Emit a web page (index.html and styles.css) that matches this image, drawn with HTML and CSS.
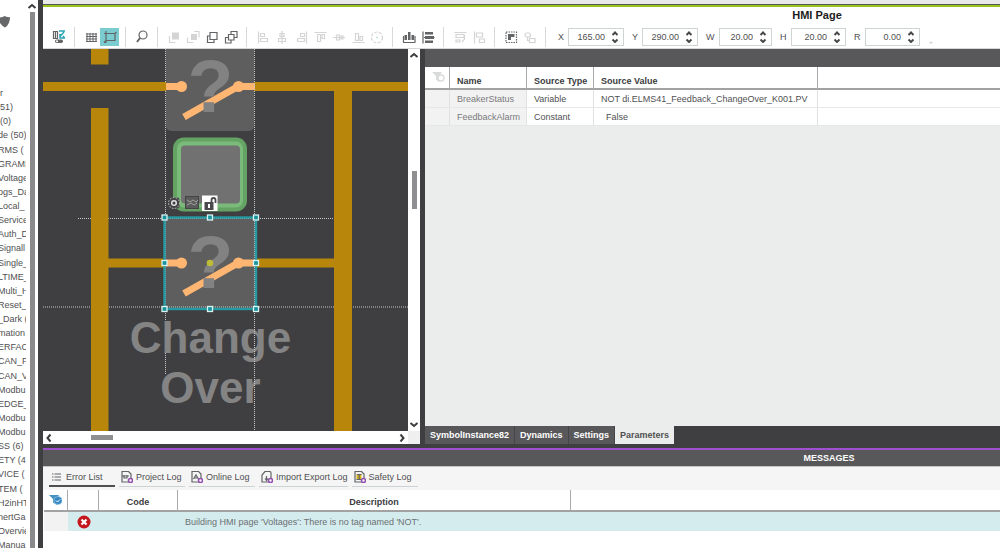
FILE: index.html
```html
<!DOCTYPE html>
<html lang="en">
<head>
<meta charset="utf-8">
<title>HMI Page</title>
<link rel="stylesheet" href="styles.css">
</head>
<body>
<div class="app">
  <aside class="sidebar">
    <div class="tree">
      <svg class="shield" viewBox="0 0 12 12"><path d="M0 1.500Q3 1 4.500 0Q7 1.500 10 1Q10 8.500 5 11.500Q2 10 0 7Z" fill="#66686a"/></svg>
      <ul class="tree-list">
        <li>r</li><li>51)</li><li>(0)</li><li>de (50)</li><li>RMS (</li><li>GRAMS</li><li>Voltage</li><li>ogs_Da</li>
        <li>Local_</li><li>Service</li><li>Auth_D</li><li>Signall</li><li>Single_</li><li>LTIME_</li><li>Multi_H</li><li>Reset_</li>
        <li>_Dark (</li><li>mation</li><li>ERFAC</li><li>CAN_F</li><li>CAN_V</li><li>Modbu</li><li>EDGE_</li><li>Modbu</li>
        <li>Modbu</li><li>SS (6)</li><li>ETY (4</li><li>VICE (</li><li>TEM (</li><li>H2inHT</li><li>nertGa</li><li>Overvie</li><li>Manua</li>
      </ul>
    </div>
    <div class="tree-scroll">
      <button class="arrow" aria-label="Scroll up"><svg viewBox="0 0 10 6"><path d="M1.500 5L5 2L8.500 5"/></svg></button>
      <div class="thumb"></div>
    </div>
  </aside>

  <main class="main">
    <header class="page-title"><h1>HMI Page</h1></header>

    <div class="toolbar">
      <div class="group">
        <button class="tool" aria-label="Toggle view"><svg viewBox="0 0 16 16"><path d="M2.500 2.500h4v7h-4zM4.500 2.500v7" class="s"/><path d="M8 2h6M13 3L9 7.500M9 5v4h5M12 7l1.500 2" stroke="#2aa4b4" stroke-width="1.500" fill="none"/><rect x="4" y="10.500" width="8" height="3.500" rx="1.700" fill="#636466"/><circle cx="6" cy="12.200" r="1" fill="#fff"/></svg></button>
      </div>
      <div class="group">
        <button class="tool" aria-label="Grid"><svg viewBox="0 0 16 16"><path d="M4 4v9M7 4v9M10 4v9M13 4v9M3 5h11M3 7.500h11M3 10h11M3 12.500h11" class="s thin"/></svg></button>
        <button class="tool active" aria-label="Snap"><svg viewBox="0 0 16 16"><path d="M4 4.500h9v7H4zM2 4.500h2M4 2v2.500M2 13.500l2-2M13 4.500l1.500-1.500M4 11.500v2.500" class="s"/></svg></button>
      </div>
      <div class="group">
        <button class="tool" aria-label="Zoom"><svg viewBox="0 0 16 16"><circle cx="9" cy="6" r="4" class="s"/><path d="M6 9L3 13" class="s thick"/></svg></button>
      </div>
      <div class="group">
        <button class="tool off" aria-label="Bring to front"><svg viewBox="0 0 16 16"><path d="M6 3.500h7v7H6z" class="f"/><path d="M3.500 7v6.500h6" class="s"/></svg></button>
        <button class="tool off" aria-label="Bring forward"><svg viewBox="0 0 16 16"><path d="M6 5h6v6H6z" class="f"/><path d="M9 2.500h5v6M2.500 8.500v5h6" class="s"/></svg></button>
        <button class="tool" aria-label="Send backward"><svg viewBox="0 0 16 16"><path d="M6 3.500h7v7H6zM6 7H3.500v6.500H10v-3" class="s"/></svg></button>
        <button class="tool" aria-label="Send to back"><svg viewBox="0 0 16 16"><path d="M5.500 5.500h5.500v5.500H5.500zM8 5V2.500h6v6h-3M5.500 8.500H2.500V14H8v-3" class="s"/></svg></button>
      </div>
      <div class="group">
        <button class="tool off" aria-label="Align left"><svg viewBox="0 0 16 16"><path d="M3.500 2.500v12M5.500 4.500h4v3h-4zM5.500 9.500h7v3h-7z" class="s"/></svg></button>
        <button class="tool off" aria-label="Align center"><svg viewBox="0 0 16 16"><path d="M8 2v13M6 4.500h4v3H6zM4.500 9.500h7v3h-7z" class="s"/></svg></button>
        <button class="tool off" aria-label="Align right"><svg viewBox="0 0 16 16"><path d="M13.500 2.500v12M7.500 4.500h4v3h-4zM4.500 9.500h7v3h-7z" class="s"/></svg></button>
        <button class="tool off" aria-label="Align top"><svg viewBox="0 0 16 16"><path d="M2.500 3.500h12M5.500 5.500h3v7h-3zM10 5.500h2.500v4H10z" class="s"/></svg></button>
        <button class="tool off" aria-label="Align middle"><svg viewBox="0 0 16 16"><path d="M2 8.500h12M5.500 6h3v5h-3zM10 7h2v3h-2z" class="s"/></svg></button>
        <button class="tool off" aria-label="Align bottom"><svg viewBox="0 0 16 16"><path d="M2.500 13.500h12M5.500 4.500h3v7h-3zM10 7.500h2.500v4H10z" class="s"/></svg></button>
        <button class="tool off" aria-label="Rotate"><svg viewBox="0 0 16 16"><circle cx="8" cy="8.500" r="5.500" class="s" stroke-dasharray="3 1.500"/><circle cx="8" cy="8.500" r=".8" fill="#9cd3c8"/></svg></button>
      </div>
      <div class="group">
        <button class="tool" aria-label="Distribute horizontally"><svg viewBox="0 0 16 16"><path d="M3.500 6H6v5H3.500zM7 3h2.500v8H7zM10.500 6H13v5h-2.500z" class="f"/><path d="M2 13.500h12.500M2.500 7v6M14 7v6" class="s"/></svg></button>
        <button class="tool" aria-label="Distribute vertically"><svg viewBox="0 0 16 16"><path d="M5 3h8v2.500H5zM5 7h9v3H5zM5 11.500h8V14H5z" class="f"/><path d="M3 2.500v12M4 8.500h10.500" class="s"/></svg></button>
      </div>
      <div class="group">
        <button class="tool off" aria-label="Same width"><svg viewBox="0 0 16 16"><path d="M2.500 3.500h12M4 5.500h8v3H4zM4 11h4v2H4zM12.500 6v4L10 13" class="s"/></svg></button>
        <button class="tool off" aria-label="Same height"><svg viewBox="0 0 16 16"><path d="M3.500 2.500v12M5.500 4h6v4h-6zM8.500 10h5v3.500h-5z" class="s"/></svg></button>
      </div>
      <div class="group">
        <button class="tool" aria-label="Group"><svg viewBox="0 0 16 16"><path d="M3 3h10.500v10.500H3z" class="s" stroke-dasharray="1.500 1"/><path d="M5 5h3v6H5zM8 5h3.500v3H8z" class="f"/></svg></button>
        <button class="tool off" aria-label="Ungroup"><svg viewBox="0 0 16 16"><rect x="3" y="4" width="5.500" height="4" rx="2" class="s"/><path d="M5.500 8v3.500h2M7.500 9.500H13v4H7.500z" class="s"/></svg></button>
      </div>
      <div class="fields">
        <div class="field"><label for="fx">X</label><div class="box"><input id="fx" type="text" value="165.00"><button class="spin" aria-label="Step X"><svg viewBox="0 0 8 12"><path d="M1.500 4L4 1.500L6.500 4M1.500 8.500L4 11L6.500 8.500"/></svg></button></div></div>
        <div class="field"><label for="fy">Y</label><div class="box"><input id="fy" type="text" value="290.00"><button class="spin" aria-label="Step Y"><svg viewBox="0 0 8 12"><path d="M1.500 4L4 1.500L6.500 4M1.500 8.500L4 11L6.500 8.500"/></svg></button></div></div>
        <div class="field"><label for="fw">W</label><div class="box"><input id="fw" type="text" value="20.00"><button class="spin" aria-label="Step W"><svg viewBox="0 0 8 12"><path d="M1.500 4L4 1.500L6.500 4M1.500 8.500L4 11L6.500 8.500"/></svg></button></div></div>
        <div class="field"><label for="fh">H</label><div class="box"><input id="fh" type="text" value="20.00"><button class="spin" aria-label="Step H"><svg viewBox="0 0 8 12"><path d="M1.500 4L4 1.500L6.500 4M1.500 8.500L4 11L6.500 8.500"/></svg></button></div></div>
        <div class="field"><label for="fr">R</label><div class="box"><input id="fr" type="text" value="0.00"><button class="spin" aria-label="Step R"><svg viewBox="0 0 8 12"><path d="M1.500 4L4 1.500L6.500 4M1.500 8.500L4 11L6.500 8.500"/></svg></button></div></div>
        <button class="overflow" aria-label="More tools"><svg viewBox="0 0 4 2"><path d="M0 0h4L2 2z" fill="#d0d0d0"/></svg></button>
      </div>
    </div>

    <div class="workspace">
      <section class="editor">
        <svg class="canvas">
          <defs>
            <g id="breaker">
              <path d="M0 37.500H16M72 37.500H89" stroke="#ffb672" stroke-width="7"/>
              <path d="M18 68L72 37.500" stroke="#ffb672" stroke-width="7"/>
              <circle cx="15.500" cy="37.500" r="5.500" fill="#ffb672"/><circle cx="72.500" cy="37.500" r="5.500" fill="#ffb672"/>
            </g>
            <rect id="handle" x="-2.500" y="-2.500" width="5" height="5" fill="#18919b" stroke="#d9f3f3" stroke-width="1.300"/>
          </defs>
          <g transform="translate(-43 -49)">
            <rect x="166" y="40" width="88" height="91" rx="5" fill="#5e5e5e"/>
            <rect x="165" y="218" width="91" height="91" fill="#5e5e5e"/>
            <path d="M43 307H408M78 218.500H334" class="guide"/>
            <path d="M165.500 49V375" class="guide"/>
            <g fill="#b8860b">
              <path d="M91 49h17.500v15.500H91zM91 108h17.500v323H91zM43 82h123v9H43zM254 82h154v9H254zM334 82h18v349h-18zM108 258.500h57v9h-57zM256 258.500h78v9h-78z"/>
            </g>
            <use href="#breaker" x="166" y="49"/>
            <use href="#breaker" x="166" y="225.500"/>
            <text x="210.500" y="112" class="mark">?</text>
            <text x="210.500" y="288" class="mark">?</text>
            <text x="210.500" y="353" class="caption">Change</text>
            <text x="210.500" y="403" class="caption">Over</text>
            <path d="M254.500 49V431" class="guide"/>
            <rect x="173" y="137.500" width="74" height="74" rx="11" fill="#64a364"/>
            <rect x="177" y="141.500" width="66" height="66" rx="7" fill="#7aba7b"/>
            <rect x="181" y="145.500" width="59" height="58" rx="4" fill="#717171"/>
            <rect x="168.500" y="197.500" width="11" height="11" rx="2" fill="#434345"/>
            <circle cx="174" cy="203" r="5.500" fill="#434345" stroke="#c9c9c9" stroke-width="1" stroke-dasharray="1.500 1.500"/>
            <circle cx="174" cy="203" r="2.300" fill="none" stroke="#e0e0e0" stroke-width="1.500"/>
            <rect x="185.500" y="196.500" width="13" height="12" fill="#5b5b5b" stroke="#444"/>
            <path d="M187 200l3 2 3-2 3 2 2-2M187 205l4-2 3 2 3-2" fill="none" stroke="#a9a9a9" stroke-width=".9"/>
            <rect x="202" y="195.500" width="15.500" height="15.500" fill="#fff"/>
            <rect x="204.500" y="202" width="9" height="8" fill="#4a4a4c"/><rect x="208" y="204" width="2" height="4" fill="#fff"/>
            <path d="M211.500 203V200Q211.500 198 213.500 198Q215.500 198 215.500 200V203" fill="none" stroke="#4a4a4c" stroke-width="1.800"/>
            <rect x="164.500" y="217.500" width="91.500" height="91.500" fill="none" stroke="#259aa2" stroke-width="2.400"/>
            <use href="#handle" x="164.500" y="217.500"/><use href="#handle" x="210" y="217.500"/><use href="#handle" x="256" y="217.500"/>
            <use href="#handle" x="164.500" y="263"/><use href="#handle" x="256" y="263"/>
            <use href="#handle" x="164.500" y="309"/><use href="#handle" x="210" y="309"/><use href="#handle" x="256" y="309"/>
            <circle cx="210" cy="263" r="3.300" fill="#bcbc36"/>
          </g>
        </svg>
        <div class="vscroll">
          <button class="arrow" aria-label="Up"><svg viewBox="0 0 10 6"><path d="M1.500 5L5 2L8.500 5"/></svg></button>
          <div class="vthumb"></div>
          <button class="arrow" aria-label="Down"><svg viewBox="0 0 10 6"><path d="M1.500 1L5 4L8.500 1"/></svg></button>
        </div>
        <div class="hscroll">
          <button class="arrow side" aria-label="Left"><svg viewBox="0 0 6 10"><path d="M4.500 1.500L1.500 5L4.500 8.500"/></svg></button>
          <div class="hthumb"></div>
          <button class="arrow side" aria-label="Right"><svg viewBox="0 0 6 10"><path d="M1.500 1.500L4.500 5L1.500 8.500"/></svg></button>
        </div>
        <div class="corner"></div>
      </section>

      <section class="params">
        <div class="band"></div>
        <table class="grid">
          <colgroup><col class="c-filter"><col class="c-name"><col class="c-type"><col class="c-value"><col></colgroup>
          <thead><tr>
            <th aria-label="Filter"><svg class="funnel" viewBox="0 0 13 11"><path d="M0 0h10L7 4v6L4 7.500V4z" fill="#d9dada"/><circle cx="9" cy="6" r="3" fill="#fff" stroke="#d9dada" stroke-width="1.300"/></svg></th>
            <th>Name</th><th>Source Type</th><th>Source Value</th><th></th>
          </tr></thead>
          <tbody>
            <tr><td class="ro"></td><td class="ro">BreakerStatus</td><td>Variable</td><td>NOT di.ELMS41_Feedback_ChangeOver_K001.PV</td><td></td></tr>
            <tr><td class="ro"></td><td class="ro">FeedbackAlarm</td><td>Constant</td><td class="indent">False</td><td></td></tr>
          </tbody>
        </table>
        <nav class="tabs">
          <button>SymbolInstance82</button><button>Dynamics</button><button>Settings</button><button class="current">Parameters</button>
        </nav>
      </section>
    </div>

    <section class="messages">
      <header class="msg-title"><h2>MESSAGES</h2></header>
      <nav class="logs">
        <button class="log current"><svg viewBox="0 0 12 12"><path d="M1 3h1.500M1 6h1.500M1 9h1.500M3.500 3H10M3.500 6H10M3.500 9H10" class="s"/></svg>Error List</button>
        <button class="log"><svg viewBox="0 0 12 12"><path d="M1 11V.5h6.500L10 3v8z" class="s"/><path d="M1 5h7M3 4v3h3V4" class="s"/><circle cx="9.500" cy="9.500" r="2" class="plus"/></svg>Project Log</button>
        <button class="log"><svg viewBox="0 0 12 12"><path d="M1 11V.5h6.500L10 3v8z" class="s"/><path d="M2.500 8L5 4l2.500 4M3 7h4" class="s"/><circle cx="9.500" cy="9.500" r="2" class="plus"/></svg>Online Log</button>
        <button class="log"><svg viewBox="0 0 12 12"><path d="M1 11V4L4 .5h4.500Q10 .5 10 2v9zM5.500 5v4M4 7.500L5.500 9.500L7 7.500" class="s"/><circle cx="9.500" cy="9.500" r="2" class="plus"/></svg>Import Export Log</button>
        <button class="log"><svg viewBox="0 0 12 12"><path d="M1 11V.5h6.500L10 3v8z" class="s"/><path d="M2.500 3h5v5.500h-5z" fill="#d9b421"/><path d="M3 3.500h4.500M2.500 8.500h5M5.200 4v4" class="s"/><circle cx="9.500" cy="9.500" r="2" class="plus"/></svg>Safety Log</button>
      </nav>
      <table class="grid errors">
        <colgroup><col class="e-filter"><col class="e-icon"><col class="e-code"><col class="e-desc"><col></colgroup>
        <thead><tr>
          <th aria-label="Filter"><svg class="funnel" viewBox="0 0 13 11"><path d="M0 0h10L8 4v6L4 7.500V4z" fill="#4593c5"/><circle cx="9" cy="5.500" r="4" fill="#3487c2" stroke="#a5cdea" stroke-width=".6"/><path d="M7 5.500l1.500 1.500L11 4.500" fill="none" stroke="#fff"/></svg></th>
          <th></th><th>Code</th><th>Description</th><th></th>
        </tr></thead>
        <tbody><tr>
          <td class="ro"></td>
          <td class="state"><svg viewBox="0 0 14 14"><circle cx="7" cy="7" r="6.500" fill="#c5161d"/><path d="M4.500 4.500l5 5M9.500 4.500l-5 5" stroke="#fff" stroke-width="2.200"/></svg></td>
          <td></td><td>Building HMI page 'Voltages': There is no tag named 'NOT'.</td><td></td>
        </tr></tbody>
      </table>
    </section>
  </main>
</div>
</body>
</html>
```
FILE: styles.css
```css
* { box-sizing: border-box; }
body { margin: 0; font: 9px/14px "Liberation Sans", Arial, sans-serif; color: #505052; background: #fff; }
button { font: inherit; color: inherit; background: none; border: 0; padding: 0; margin: 0; }
h1, h2 { margin: 0; }
svg { display: block; }
.s { stroke: #636466; stroke-width: 1.2; fill: none; }
.thin { stroke-width: 1; }
.thick { stroke-width: 2; }
.f { fill: #636466; }

.app { display: flex; height: 100vh; overflow: hidden; }

/* Project tree */
.sidebar { display: flex; flex: none; width: 43px; border-right: 5px solid #3f3f42; }
.tree { flex: none; display: flex; flex-direction: column; width: 26px; overflow: hidden; }
.shield { flex: none; width: 12px; height: 12px; margin: 16px 0 58px; }
.tree-list { flex: 1; display: flex; flex-direction: column; list-style: none; margin: 0 0 -4px -2px; padding: 0; }
.tree-list li { flex: 1; white-space: nowrap; }
.tree-list li:nth-child(-n+3) { padding-left: 2px; }
.tree-scroll { flex: 1; display: flex; flex-direction: column; align-items: center; gap: 3px; }
.arrow { flex: none; width: 10px; height: 6px; }
.arrow svg { width: 100%; height: 100%; fill: none; stroke: #3c3c3e; stroke-width: 2; }
.arrow.side { width: 6px; height: 10px; }
.tree-scroll .arrow { margin-top: 3px; }
.thumb { flex: 1; width: 5px; background: #8a8a8c; }

.main { flex: 1; min-width: 0; display: flex; flex-direction: column; }

/* Title and toolbar */
.page-title { border-top: 4px solid #e8e9e9; padding-left: 591px; text-align: center; background: linear-gradient(#55585a 1px, #9ac31c 1px, #9ac31c 3px, #fff 3px); }
.page-title h1 { font-size: 11px; line-height: 16px; padding-top: 3px; color: #1c1c1c; }
.toolbar { display: flex; height: 26px; padding-bottom: 1px; border-bottom: 1px solid #d5d6d6; }
.group { flex: none; display: flex; align-items: center; margin-top: 4px; height: 20px; padding: 0 6px; border-right: 1px solid #d9d9d9; }
.tool { width: 19px; height: 18px; display: grid; place-items: center; }
.tool svg { width: 16px; height: 16px; }
.tool.active { background: #7accd1; }
.tool.off .s { stroke: #d4d4d4; }
.tool.off .f { fill: #d4d4d4; }
.fields { display: flex; padding: 5px 0 0 4px; }
.field { display: flex; width: 74px; height: 18px; }
.field label { padding: 2px 4px 0 8px; }
.box { flex: 1; min-width: 0; display: flex; align-items: center; border: 1px solid #cfd4d5; background: #fff; padding-right: 4px; }
.box input { flex: 1; min-width: 0; width: 0; border: 0; padding: 0 6px 0 0; background: none; font: inherit; color: inherit; text-align: right; }
.spin { width: 8px; height: 12px; }
.spin svg { width: 8px; height: 12px; fill: none; stroke: #48484a; stroke-width: 2; }
.overflow { align-self: flex-end; width: 4px; height: 2px; margin: 0 0 3px 9px; }

/* Editor canvas and parameter panel */
.workspace { flex: none; height: calc(100vh - 153px); display: grid; grid-template-columns: 377px 1fr; column-gap: 5px; background: #3f3f41; }
.editor { display: grid; grid-template: 1fr 13px / 1fr 12px; min-height: 0; min-width: 0; }
.canvas { width: 100%; height: 100%; background: #3f3f41; }
.guide { stroke: #c6c6c6; stroke-width: 1; stroke-dasharray: 1 1; fill: none; }
.mark { font-size: 75px; font-weight: bold; fill: #828282; text-anchor: middle; }
.caption { font-size: 44px; font-weight: bold; fill: #848484; text-anchor: middle; }
.vscroll { display: flex; flex-direction: column; align-items: center; justify-content: space-between; background: #fff; padding: 3px 0; }
.vthumb { width: 5px; height: 38px; margin-bottom: 101px; background: #8f8f91; }
.hscroll { display: flex; align-items: center; background: #fff; padding: 0 3px; }
.hthumb { width: 22px; height: 5px; margin: 0 auto 0 39px; background: #8f8f91; }
.corner { background: #efefef; }
.params { display: flex; flex-direction: column; min-width: 0; background: #ebedec; }
.band { flex: none; height: 18px; background: #58585a; }
.grid { width: 100%; table-layout: fixed; border-collapse: separate; border-spacing: 0; background: #fff; }
.grid th { height: 23px; padding: 6px 0 0 7px; text-align: left; line-height: 12px; white-space: nowrap; color: #3c3c3e; border-right: 1px solid #a9aaaa; border-bottom: 2px solid #a2a2a3; }
.grid td { height: 18px; padding: 0 0 0 7px; line-height: 12px; white-space: nowrap; border-right: 1px solid #e0e2e2; border-bottom: 1px solid #e6e8e8; }
.grid th:last-child, .grid td:last-child { border-right: 0; }
.grid .ro { background: #f2f2f2; color: #7a7a7c; }
.grid .indent { padding-left: 12px; }
.c-filter { width: 25px; } .c-name { width: 77px; } .c-type { width: 67px; } .c-value { width: 224px; }
.funnel { width: 13px; height: 11px; }
.params th:first-child { padding: 0 0 0 7px; }
.tabs { margin-top: auto; display: flex; height: 18px; background: #3f3f41; font-weight: bold; color: #fff; }
.tabs button { padding: 0 5px 1px; background: #58585a; border-right: 1px solid #454547; }
.tabs .current { background: #ebedec; color: #505052; border: 0; }

/* Messages */
.messages { flex: 1; border-top: 4px solid #3f3f42; }
.msg-title { border-top: 2px solid #9f4fcf; border-bottom: 1px solid #c5c5c5; background: #58585a; color: #fff; padding-left: 615px; text-align: center; }
.msg-title h2 { font-size: 9px; line-height: 16px; }
.logs { display: flex; gap: 4px; height: 23px; padding: 1px 6px 3px; background: #f5f5f5; }
.log { display: flex; align-items: center; gap: 3px; min-width: 66px; padding: 0 0 0 2px; border-bottom: 1px solid #cdd2d4; }
.log svg { width: 12px; height: 12px; }
.log.current { border-bottom: 2px solid #4d4f51; }
.plus { fill: #fff; stroke: #944fae; stroke-width: 1.6; }
.errors { border-left: 1px solid #fff; }
.errors th { text-align: center; padding: 3px 0 0; height: 22px; }
.errors th:first-child { padding: 0 0 0 5px; }
.errors td { height: 19px; background: #d4ecee; border: 0; color: #6c7072; }
.errors .state { padding: 0; }
.state svg { width: 14px; height: 14px; margin: 0 auto; }
.e-filter { width: 24px; } .e-icon { width: 31px; } .e-code { width: 79px; } .e-desc { width: 393px; }
```
